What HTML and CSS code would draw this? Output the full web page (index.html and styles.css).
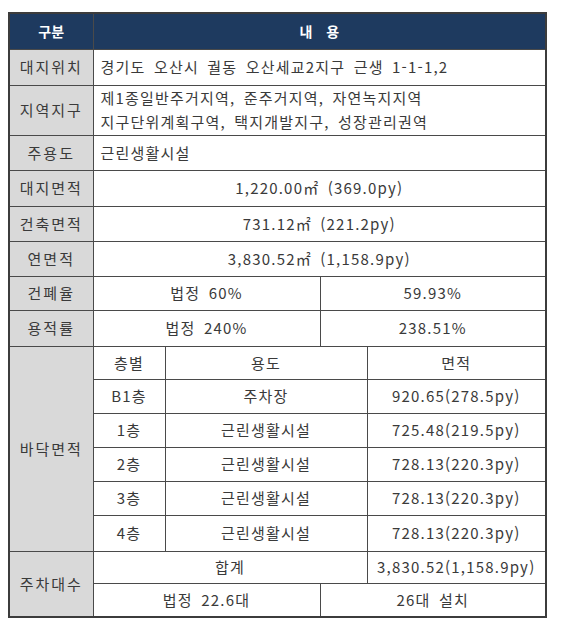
FILE: index.html
```html
<!DOCTYPE html>
<html lang="ko">
<head>
<meta charset="utf-8">
<link rel="stylesheet" href="styles.css">
</head>
<body>
<table class="spec">
  <colgroup>
    <col class="c1"><col class="c2"><col class="c3"><col class="c4"><col class="c5">
  </colgroup>
  <tr class="r36 head">
    <th>구분</th>
    <th colspan="4" class="wide">내 용</th>
  </tr>
  <tr class="r36">
    <td class="label">대지위치</td>
    <td colspan="4" class="left">경기도 오산시 궐동 오산세교2지구 근생 1-1-1,2</td>
  </tr>
  <tr class="r50">
    <td class="label">지역지구</td>
    <td colspan="4" class="left two">제1종일반주거지역, 준주거지역, 자연녹지지역<br>지구단위계획구역, 택지개발지구, 성장관리권역</td>
  </tr>
  <tr class="r35">
    <td class="label">주용도</td>
    <td colspan="4" class="left">근린생활시설</td>
  </tr>
  <tr class="r36">
    <td class="label">대지면적</td>
    <td colspan="4">1,220.00㎡ (369.0py)</td>
  </tr>
  <tr class="r35">
    <td class="label">건축면적</td>
    <td colspan="4">731.12㎡ (221.2py)</td>
  </tr>
  <tr class="r35">
    <td class="label">연면적</td>
    <td colspan="4">3,830.52㎡ (1,158.9py)</td>
  </tr>
  <tr class="r34">
    <td class="label">건폐율</td>
    <td colspan="2">법정 60%</td>
    <td colspan="2">59.93%</td>
  </tr>
  <tr class="r36">
    <td class="label">용적률</td>
    <td colspan="2">법정 240%</td>
    <td colspan="2">238.51%</td>
  </tr>
  <tr class="r33">
    <td class="label" rowspan="6">바닥면적</td>
    <td>층별</td>
    <td colspan="2">용도</td>
    <td>면적</td>
  </tr>
  <tr class="r34">
    <td>B1층</td>
    <td colspan="2">주차장</td>
    <td>920.65(278.5py)</td>
  </tr>
  <tr class="r34">
    <td>1층</td>
    <td colspan="2">근린생활시설</td>
    <td>725.48(219.5py)</td>
  </tr>
  <tr class="r34">
    <td>2층</td>
    <td colspan="2">근린생활시설</td>
    <td>728.13(220.3py)</td>
  </tr>
  <tr class="r34">
    <td>3층</td>
    <td colspan="2">근린생활시설</td>
    <td>728.13(220.3py)</td>
  </tr>
  <tr class="r36">
    <td>4층</td>
    <td colspan="2">근린생활시설</td>
    <td>728.13(220.3py)</td>
  </tr>
  <tr class="r32">
    <td class="label" rowspan="2">주차대수</td>
    <td colspan="3">합계</td>
    <td>3,830.52(1,158.9py)</td>
  </tr>
  <tr class="r34">
    <td colspan="2">법정 22.6대</td>
    <td colspan="2">26대 설치</td>
  </tr>
</table>
</body>
</html>
```

FILE: styles.css
```css
html, body {
  margin: 0;
  padding: 0;
  background: #ffffff;
}

body {
  font-family: "Noto Sans CJK KR", "Noto Sans", sans-serif;
  color: #3a3a3a;
}

.spec {
  margin: 12px 0 0 8px;
  width: 537px;
  table-layout: fixed;
  border-collapse: collapse;
  border: 2px solid #3c3c3c;
  font-size: 15px;
}

.c1 { width: 84px; }
.c2 { width: 72px; }
.c3 { width: 155px; }
.c4 { width: 47px; }
.c5 { width: 179px; }

.spec th,
.spec td {
  border: 1px solid #4a4a4a;
  padding: 0;
  text-align: center;
  vertical-align: middle;
  font-weight: normal;
  white-space: nowrap;
  line-height: 20px;
  letter-spacing: 1.2px;
  word-spacing: 3px;
}

.head th {
  background: #1e3a5f;
  color: #ffffff;
  font-weight: bold;
  font-size: 14px;
  letter-spacing: 0;
}

.head .wide {
  word-spacing: 10px;
}

.spec .label {
  background: #d9d9d9;
  letter-spacing: 2px;
}

.spec .left {
  text-align: left;
  padding-left: 7px;
}

.spec .two {
  line-height: 24px;
}

.r50 { height: 50px; }
.r36 { height: 36px; }
.r35 { height: 35px; }
.r34 { height: 34px; }
.r33 { height: 33px; }
.r32 { height: 32px; }
```
